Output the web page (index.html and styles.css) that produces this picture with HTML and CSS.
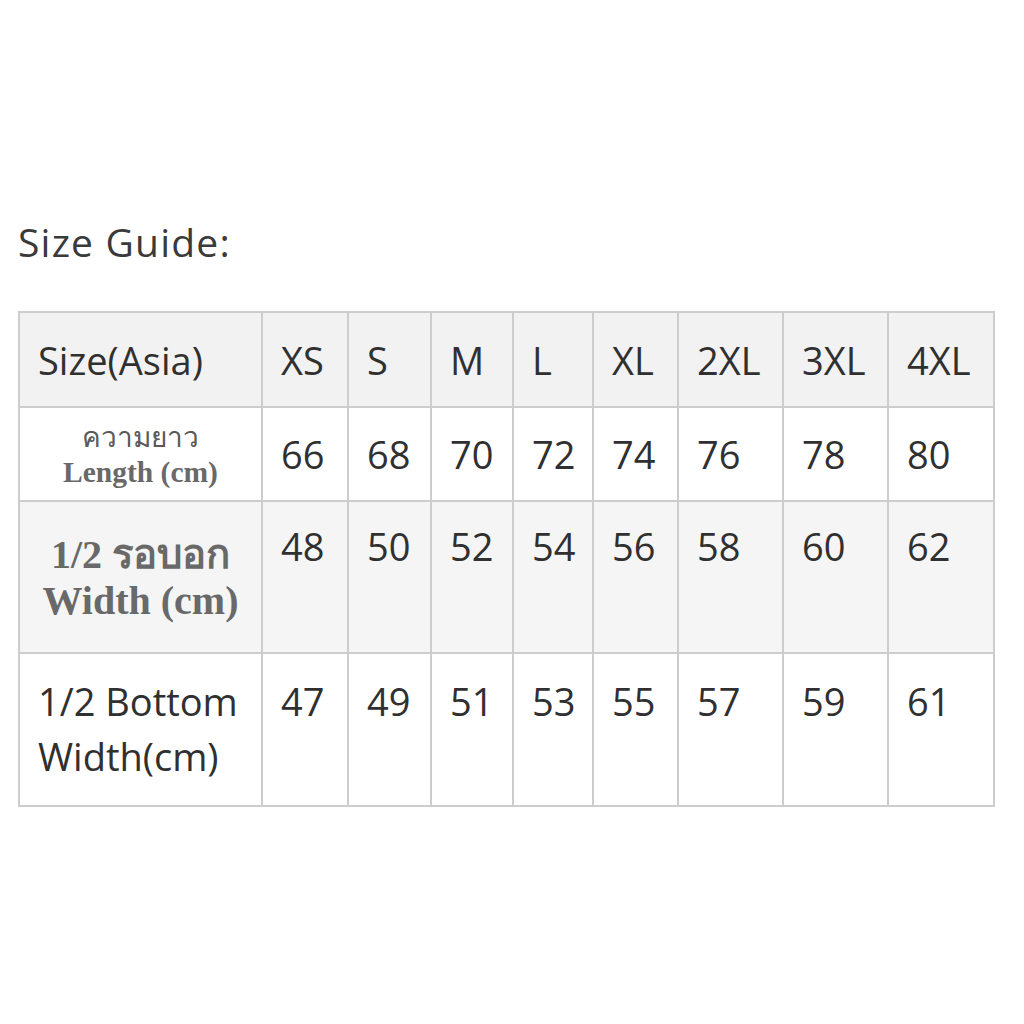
FILE: index.html
```html
<!DOCTYPE html>
<html lang="th">
<head>
<meta charset="utf-8">
<title>Size Guide</title>
<link rel="stylesheet" href="styles.css">
</head>
<body>
<main class="page">
  <h1 class="title">Size Guide:</h1>
  <table class="sizes">
    <colgroup>
      <col class="c-label">
      <col class="c-xs">
      <col class="c-s">
      <col class="c-m">
      <col class="c-l">
      <col class="c-xl">
      <col class="c-2xl">
      <col class="c-3xl">
      <col class="c-4xl">
    </colgroup>
    <tr class="row-head">
      <td class="label">Size(Asia)</td>
      <td>XS</td><td>S</td><td>M</td><td>L</td><td>XL</td><td>2XL</td><td>3XL</td><td>4XL</td>
    </tr>
    <tr class="row-length">
      <td class="label serif small"><span class="thai-light">ความยาว</span><br>Length (cm)</td>
      <td>66</td><td>68</td><td>70</td><td>72</td><td>74</td><td>76</td><td>78</td><td>80</td>
    </tr>
    <tr class="row-width">
      <td class="label serif big">1/2 รอบอก<br>Width (cm)</td>
      <td>48</td><td>50</td><td>52</td><td>54</td><td>56</td><td>58</td><td>60</td><td>62</td>
    </tr>
    <tr class="row-bottom">
      <td class="label">1/2 Bottom<br>Width(cm)</td>
      <td>47</td><td>49</td><td>51</td><td>53</td><td>55</td><td>57</td><td>59</td><td>61</td>
    </tr>
  </table>
</main>
</body>
</html>
```

FILE: styles.css
```css
html, body {
  margin: 0;
  padding: 0;
  background: #ffffff;
}

.page {
  padding: 219px 0 0 18px;
  font-family: "Open Sans", Lato, sans-serif;
  color: #333333;
}

.title {
  margin: 0;
  font-weight: 400;
  font-size: 39px;
  line-height: 46px;
  letter-spacing: 1.2px;
  color: #3a3a3a;
}

.sizes {
  margin-top: 46px;
  border-collapse: collapse;
  table-layout: fixed;
  width: 977px;
  font-size: 38px;
  line-height: 44px;
  font-weight: 400;
  color: #303030;
}

.sizes td {
  border: 2px solid #cdcdcd;
  padding: 0 0 0 18px;
  text-align: left;
  white-space: nowrap;
}

.c-label { width: 243px; }
.c-xs { width: 86px; }
.c-s { width: 83px; }
.c-m { width: 82px; }
.c-l { width: 80px; }
.c-xl { width: 85px; }
.c-2xl { width: 105px; }
.c-3xl { width: 105px; }
.c-4xl { width: 106px; }

.row-head { height: 95px; }
.row-length { height: 94px; }
.row-width { height: 152px; }
.row-bottom { height: 153px; }

.row-head td {
  background: #f2f2f2;
  vertical-align: middle;
}

.row-length td {
  background: #ffffff;
  vertical-align: middle;
}

.row-width td {
  background: #f5f5f5;
  vertical-align: top;
  padding-top: 22px;
}

.row-bottom td {
  background: #ffffff;
  vertical-align: top;
  padding-top: 20px;
  line-height: 55px;
}

.label.serif {
  font-family: "Liberation Serif", "Times New Roman", serif;
  font-weight: 700;
  color: #696969;
  text-align: center;
  padding-left: 0;
}

.label.small {
  font-size: 29.5px;
  line-height: 34px;
}

.label.big {
  font-size: 40px;
  line-height: 46px;
  padding-top: 30px;
}

.thai-light {
  font-size: 28px;
  font-weight: 400;
  color: #5a5a5a;
}
```
